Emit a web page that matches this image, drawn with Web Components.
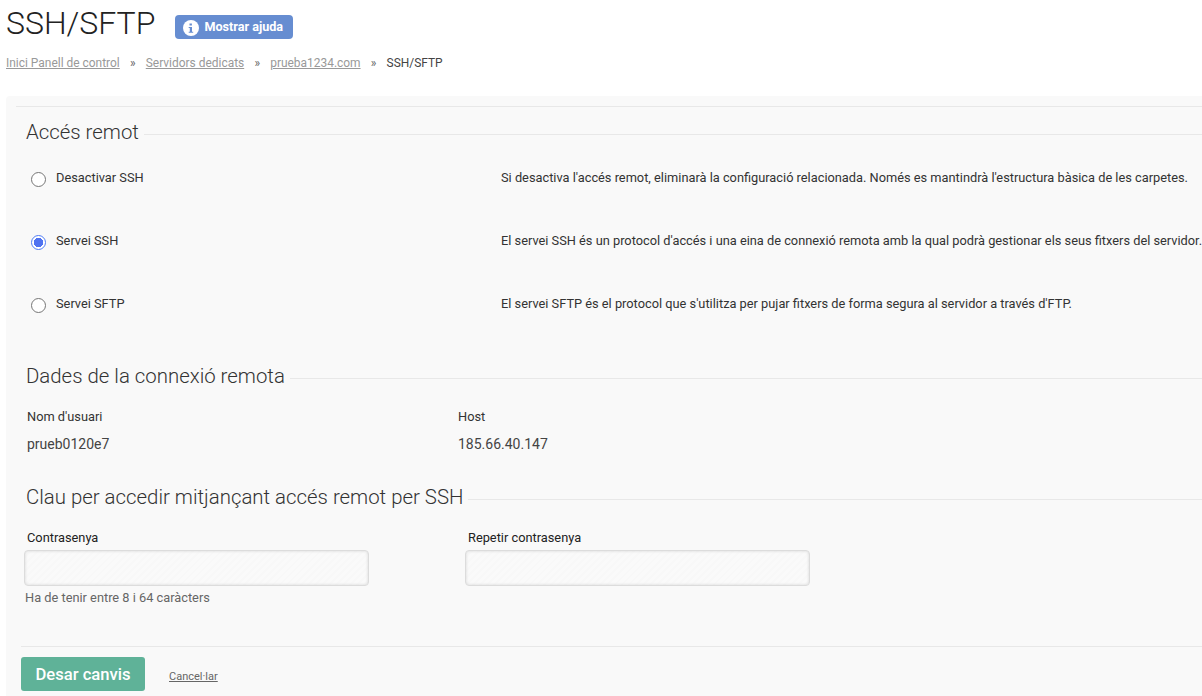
<!DOCTYPE html>
<html lang="ca">
<head>
<meta charset="utf-8">
<title>SSH/SFTP</title>
<style>
html, body { margin: 0; height: 696px; overflow: hidden; background: #fff; }
body { font-family: Roboto, "Liberation Sans", sans-serif; color: #333; }
</style>
</head>
<body>
<page-header title-text="SSH/SFTP">
    <a href="#">Inici Panell de control</a>
    <a href="#">Servidors dedicats</a>
    <a href="#">prueba1234.com</a>
    <span>SSH/SFTP</span>
</page-header>
<form-panel>
    <form-section heading="Accés remot">
        <radio-row label="Desactivar SSH">Si desactiva l'accés remot, eliminarà la configuració relacionada. Només es mantindrà l'estructura bàsica de les carpetes.</radio-row>
        <radio-row label="Servei SSH" checked>El servei SSH és un protocol d'accés i una eina de connexió remota amb la qual podrà gestionar els seus fitxers del servidor.</radio-row>
        <radio-row label="Servei SFTP">El servei SFTP és el protocol que s'utilitza per pujar fitxers de forma segura al servidor a través d'FTP.</radio-row>
    </form-section>
    <form-section heading="Dades de la connexió remota" class="data">
        <data-grid>
            <data-item label="Nom d'usuari" value="prueb0120e7"></data-item>
            <data-item label="Host" value="185.66.40.147"></data-item>
        </data-grid>
    </form-section>
    <form-section heading="Clau per accedir mitjançant accés remot per SSH" class="pass">
        <password-grid>
            <password-field label="Contrasenya" hint="Ha de tenir entre 8 i 64 caràcters"></password-field>
            <password-field label="Repetir contrasenya"></password-field>
        </password-grid>
    </form-section>
    <form-actions></form-actions>
</form-panel>
<script>
class PageHeader extends HTMLElement {
    constructor() {
        super();
        this.attachShadow({ mode: 'open' });
        this.shadowRoot.innerHTML = `<style>
            :host { display: block; padding: 0 0 0 6px; height: 96px; box-sizing: border-box; }
            .top { display: flex; align-items: center; height: 50px; padding-top: 1px; box-sizing: border-box; }
            h1 { margin: 0 0 4px; font-size: 32px; font-weight: 300; color: #222; line-height: 45px; }
            button {
                display: flex; align-items: center; gap: 5px;
                margin-left: 20px; margin-top: 3px; height: 24px; width: 118px; padding: 0 0 2px 8px; box-sizing: border-box;
                border: 0; border-radius: 4px; background: #668dd1; color: #fff;
                font: 700 12.600px Roboto, sans-serif;
            }
            svg { display: block; margin-top: 4px; }
            nav { display: flex; height: 16px; margin-top: 5px; align-items: center; font-size: 11.950px; color: #333; line-height: 16px; }
            nav i { font-style: normal; color: #666; width: 26px; text-align: center; }
            ::slotted(a) { color: #999; text-decoration: underline; }
            ::slotted(span) { color: #444; }
        </style>
        <div class="top"><h1></h1>
            <button type="button">
                <svg width="16" height="16" viewBox="0 0 16 16"><circle cx="8" cy="8" r="8" fill="#fff"/><path d="M6.500 3.600h2.400v2H6.500zM5.700 7h3.300v4.700h1.200v1.100H5.700v-1.100h1.100V8.100H5.700z" fill="#668dd1"/></svg>
                Mostrar ajuda
            </button>
        </div>
        <nav></nav>`;
    }
    connectedCallback() {
        this.shadowRoot.querySelector('h1').textContent = this.getAttribute('title-text');
        // separators between the slotted crumbs
        const nav = this.shadowRoot.querySelector('nav');
        [...this.children].forEach((c, i, all) => {
            const s = document.createElement('slot');
            s.name = 'c' + i;
            c.slot = 'c' + i;
            nav.appendChild(s);
            if (i < all.length - 1) {
                const sep = document.createElement('i');
                sep.textContent = '»';
                nav.appendChild(sep);
            }
        });
    }
}
customElements.define('page-header', PageHeader);

class FormPanel extends HTMLElement {
    constructor() {
        super();
        this.attachShadow({ mode: 'open' });
        this.shadowRoot.innerHTML = `<style>
            :host { display: block; margin-left: 6px; height: 600px; padding: 10px 0 0 10px; box-sizing: border-box; background: #f9f9f9; border-radius: 4px 0 0 0; }
            .rule { border-top: 1px solid #e8e8e8; }
        </style><div class="rule"><slot></slot></div>`;
    }
}
customElements.define('form-panel', FormPanel);

class FormSection extends HTMLElement {
    constructor() {
        super();
        this.attachShadow({ mode: 'open' });
        this.shadowRoot.innerHTML = `<style>
            :host { display: block; }
            :host(.data) { margin-top: 11px; }
            :host(.pass) { margin-top: 21px; }
            h2 { display: flex; align-items: center; box-sizing: border-box; margin: 0; padding: 0 0 2px 10px; height: 52px; font-size: 20.400px; font-weight: 300; color: #333; }
            :host(.data) h2, :host(.pass) h2 { height: 36px; }
            h2::after { content: ""; flex: 1; border-top: 1px solid #e8e8e8; margin-left: 5px; margin-top: 5px; }
        </style><h2></h2><slot></slot>`;
    }
    connectedCallback() {
        this.shadowRoot.querySelector('h2').textContent = this.getAttribute('heading');
    }
}
customElements.define('form-section', FormSection);

class RadioRow extends HTMLElement {
    constructor() {
        super();
        this.attachShadow({ mode: 'open' });
        this.shadowRoot.innerHTML = `<style>
            :host { display: grid; grid-template-columns: 470px 1fr; height: 63px; padding-left: 15px; font-size: 12.800px; color: #333; white-space: nowrap; overflow: hidden; }
            .opt { display: flex; align-items: flex-start; padding-top: 11px; }
            .dot { width: 15px; height: 15px; box-sizing: border-box; margin-top: 2px; margin-right: 10px; border-radius: 50%; border: 1px solid #767676; background: #fff; flex: none; }
            .on { border: 1.500px solid #4f7cf5; background: radial-gradient(circle, #4f72f0 0 4.500px, #fff 5px); }
            .txt { padding-top: 11px; }
            span, .txt { line-height: 16px; }
        </style>
        <div class="opt"><div class="dot"></div><span></span></div>
        <div class="txt"><slot></slot></div>`;
    }
    connectedCallback() {
        this.shadowRoot.querySelector('span').textContent = this.getAttribute('label');
        if (this.hasAttribute('checked')) this.shadowRoot.querySelector('.dot').classList.add('on');
    }
}
customElements.define('radio-row', RadioRow);

class DataGrid extends HTMLElement {
    constructor() {
        super();
        this.attachShadow({ mode: 'open' });
        this.shadowRoot.innerHTML = `<style>
            :host { display: grid; grid-template-columns: 431px 1fr; padding: 14px 0 0 11px; height: 64px; box-sizing: border-box; }
        </style><slot></slot>`;
    }
}
customElements.define('data-grid', DataGrid);

class DataItem extends HTMLElement {
    constructor() {
        super();
        this.attachShadow({ mode: 'open' });
        this.shadowRoot.innerHTML = `<style>
            :host { display: block; }
            div { font-size: 12.800px; line-height: 16px; color: #333; }
            p { margin: 11px 0 0; font-size: 14px; line-height: 16px; color: #444; }
        </style><div></div><p></p>`;
    }
    connectedCallback() {
        this.shadowRoot.querySelector('div').textContent = this.getAttribute('label');
        this.shadowRoot.querySelector('p').textContent = this.getAttribute('value');
    }
}
customElements.define('data-item', DataItem);

class PasswordGrid extends HTMLElement {
    constructor() {
        super();
        this.attachShadow({ mode: 'open' });
        this.shadowRoot.innerHTML = `<style>
            :host { display: grid; grid-template-columns: 441px 1fr; padding: 14px 0 0 8px; height: 130px; box-sizing: border-box; }
        </style><slot></slot>`;
    }
}
customElements.define('password-grid', PasswordGrid);

class PasswordField extends HTMLElement {
    constructor() {
        super();
        this.attachShadow({ mode: 'open' });
        this.shadowRoot.innerHTML = `<style>
            :host { display: block; }
            label { display: block; padding-left: 3px; font-size: 12.800px; line-height: 16px; color: #222; }
            input {
                display: block; width: 345px; height: 36px; margin: 4px 0 0; box-sizing: border-box;
                border: 1px solid #dcdcdc; border-radius: 4px; outline: 0;
                box-shadow: inset 0 0 3px #d4d4d4;
                background: repeating-linear-gradient(135deg, #fafafa 0 3px, #f8f8f8 3px 5px);
            }
            small { display: block; margin-top: 4px; padding-left: 1px; font-size: 12.800px; line-height: 16px; color: #666; }
        </style><label></label><input type="password"><small></small>`;
    }
    connectedCallback() {
        this.shadowRoot.querySelector('label').textContent = this.getAttribute('label');
        this.shadowRoot.querySelector('small').textContent = this.getAttribute('hint') || '';
    }
}
customElements.define('password-field', PasswordField);

class FormActions extends HTMLElement {
    constructor() {
        super();
        this.attachShadow({ mode: 'open' });
        this.shadowRoot.innerHTML = `<style>
            :host { display: flex; align-items: center; margin-left: 5px; padding-top: 10px; border-top: 1px solid #e8e8e8; }
            button { width: 124px; height: 34px; border: 0; border-radius: 3px; background: #5fb298; color: #fff; font: 500 16.600px Roboto, sans-serif; }
            a { margin-left: 24px; margin-top: 4px; font-size: 11px; color: #666; text-decoration: underline; }
        </style><button type="button">Desar canvis</button><a href="#">Cancel·lar</a>`;
    }
}
customElements.define('form-actions', FormActions);
</script>
</body>
</html>
